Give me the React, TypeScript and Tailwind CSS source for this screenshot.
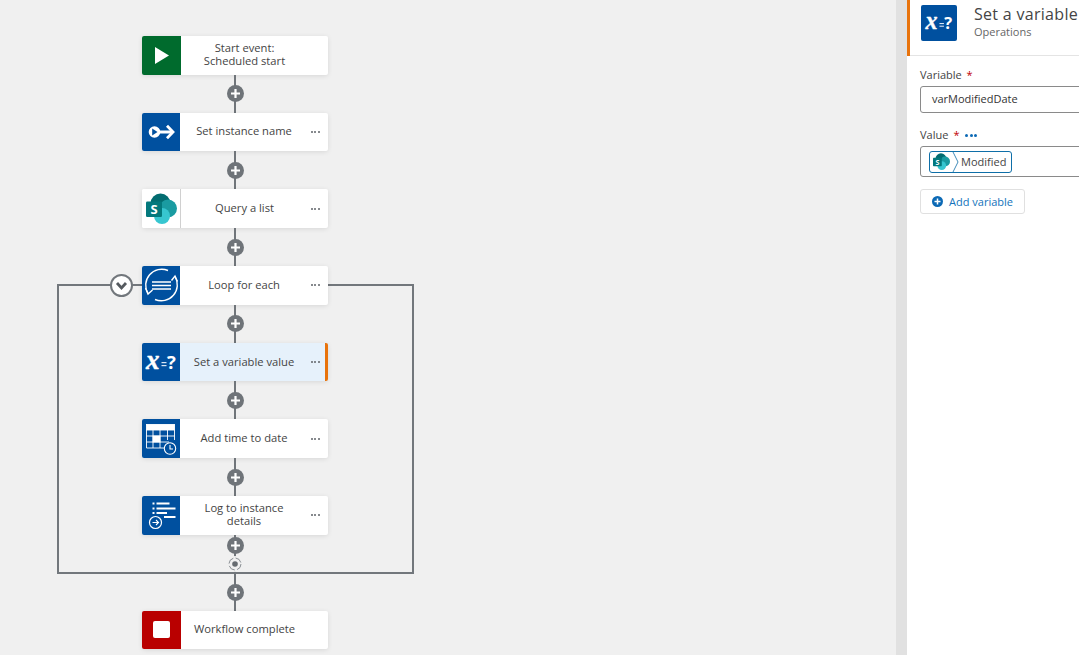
import React from "react";

const font = { fontFamily: '"Open Sans", sans-serif' };

function SharePoint({ size = 31 }: { size?: number }) {
  return (
    <svg width={size} height={size} viewBox="0 0 31 31">
      <circle cx="14.500" cy="10.500" r="10" fill="#036c70" />
      <circle cx="22" cy="15.500" r="9" fill="#1a9ba1" />
      <circle cx="16" cy="23" r="8" fill="#37c6d0" />
      <rect x="0" y="8.500" width="16" height="15.500" rx="1.200" fill="#03787c" />
      <text x="8" y="21" textAnchor="middle" fontSize="13" fontWeight="700" fill="#fff" fontFamily="Open Sans">S</text>
    </svg>
  );
}

function VarIcon({ w = 38, h = 38 }: { w?: number; h?: number }) {
  return (
    <svg width={w} height={h} viewBox="0 0 38 38">
      <text x="4" y="25.500" fontFamily="Liberation Serif" fontStyle="italic" fontWeight="700" fontSize="27" fill="#fff" stroke="#fff" strokeWidth="0.400">x</text>
      <rect x="19.500" y="19" width="5" height="1.200" fill="#d8e6f4" />
      <rect x="19.500" y="22" width="5" height="1.200" fill="#d8e6f4" />
      <text x="25" y="25.500" fontFamily="Open Sans" fontWeight="700" fontSize="18.500" fill="#fff">?</text>
    </svg>
  );
}

const PlayIcon = () => (
  <svg width="39" height="38" viewBox="0 0 39 38"><path d="M13 11 L27 19.500 L13 28 Z" fill="#fff" /></svg>
);
const InstanceIcon = () => (
  <svg width="38" height="38" viewBox="0 0 38 38" fill="none">
    <circle cx="12.500" cy="19" r="5.800" fill="#fff" />
    <path d="M10.200 15.500 L15.500 19 L10.200 22.500 Z" fill="#00509f" />
    <path d="M17 19 H30.500" stroke="#fff" strokeWidth="2.800" />
    <path d="M25 12.800 L31 19 L25 25.200" stroke="#fff" strokeWidth="2.800" />
  </svg>
);
const LoopIcon = () => (
  <svg width="38" height="38" viewBox="0 0 38 38" fill="none" stroke="#fff" strokeWidth="1.400">
    <path d="M6 27.500 A16 16 0 0 1 26 4.500" />
    <path d="M3.500 22 L6 28 L10.500 24" />
    <path d="M33 10.500 A16 16 0 0 1 13 33.500" />
    <path d="M29.500 14.500 L33 10 L35.500 15.500" />
    <path d="M10 16 H29 M10 19.500 H29 M10 23 H29" strokeWidth="1.600" />
  </svg>
);
const CalIcon = () => (
  <svg width="38" height="38" viewBox="0 0 38 38" fill="none" stroke="#fff" strokeWidth="0.900">
    <rect x="4.500" y="4.500" width="28" height="5.500" fill="#fff" />
    <path d="M4.500 10 V28 H24 M32.500 10 V20 M4.500 16 H32.500 M4.500 22 H27 M11 10 V28 M18 10 V28 M25.500 10 V20" />
    <rect x="11" y="16" width="7" height="6" fill="#fff" />
    <circle cx="28" cy="28.500" r="5.700" fill="#00509f" strokeWidth="1.100" />
    <path d="M28 25 V29 H31" strokeWidth="1.100" />
  </svg>
);
const LogIcon = () => (
  <svg width="38" height="38" viewBox="0 0 38 38" fill="none" stroke="#fff">
    <path d="M10.500 7.500 H12.500 M10.500 12.500 H12.500 M10.500 17 H12.500" strokeWidth="1.800" />
    <path d="M14.500 7.500 H27.500 M14.500 12.500 H33.500 M14.500 17 H25 M22 21 H33.500" strokeWidth="1.800" />
    <circle cx="13.500" cy="26.500" r="6" strokeWidth="1.200" />
    <path d="M10.500 26.500 H16.500 M14 24 L16.500 26.500 L14 29" strokeWidth="1.100" />
  </svg>
);
const StopIcon = () => (
  <div className="w-[17px] h-[17px] bg-white rounded-[2px]" />
);

function Dots() {
  return (
    <div className="w-[20px] shrink-0 flex justify-center gap-[1.500px] pr-[6px]">
      <span className="w-[2px] h-[2px] rounded-full bg-[#5f6368]" />
      <span className="w-[2px] h-[2px] rounded-full bg-[#5f6368]" />
      <span className="w-[2px] h-[2px] rounded-full bg-[#5f6368]" />
    </div>
  );
}

function Card({
  label,
  icon,
  iconBg = "bg-[#00509f]",
  iconW = "w-[38px]",
  dots = true,
  active = false,
}: {
  label: React.ReactNode;
  icon: React.ReactNode;
  iconBg?: string;
  iconW?: string;
  dots?: boolean;
  active?: boolean;
}) {
  return (
    <div
      className={`relative flex items-center h-[38.600px] rounded-[2px] shadow-[0_1px_5px_rgba(0,0,0,0.1)] overflow-hidden shrink-0 ${
        active ? "bg-[#e6f1fb]" : "bg-white"
      }`}
    >
      <div className={`${iconW} h-full ${iconBg} shrink-0 flex items-center justify-center`}>{icon}</div>
      <div className="flex-1 min-w-0 pb-[2px] text-center text-[11.200px] leading-[13px] text-[#444]">{label}</div>
      {dots ? <Dots /> : <div className="w-[20px] shrink-0" />}
      {active && <div className="absolute inset-y-0 right-0 w-[3px] bg-[#e8730c]" />}
    </div>
  );
}

function Plus() {
  return (
    <div className="w-[17px] h-[17px] rounded-full bg-[#6f7479] flex items-center justify-center relative z-10">
      <svg width="11" height="11" viewBox="0 0 11 11">
        <path d="M5.500 1 V10 M1 5.500 H10" stroke="#fff" strokeWidth="2.200" />
      </svg>
    </div>
  );
}

function Connector() {
  return (
    <div className="h-[38.100px] pt-[0.500px] shrink-0 relative flex items-center justify-center">
      <div className="absolute inset-y-0 left-1/2 w-[2px] -ml-[1px] bg-[#70757a]" />
      <Plus />
    </div>
  );
}

function Collapse() {
  return (
    <div className="absolute left-[110px] top-[274px] w-[23px] h-[23px] rounded-full bg-white border-2 border-[#72777c] flex items-center justify-center z-10">
      <svg width="13" height="13" viewBox="0 0 13 13" fill="none">
        <path d="M2 4 L6.500 9 L11 4" stroke="#555a5f" strokeWidth="2.800" />
      </svg>
    </div>
  );
}

function LoopEnd() {
  return (
    <div className="h-[75.900px] shrink-0 relative flex flex-col items-center">
      <div className="absolute inset-y-0 left-1/2 w-[2px] -ml-[1px] bg-[#70757a]" />
      <div className="mt-[2px]"><Plus /></div>
      <div className="relative z-10 mt-[2px] bg-[#f0f0f0] rounded-full w-[16px] h-[16px]">
        <svg width="16" height="16" viewBox="0 0 16 16" fill="none">
          <circle cx="8" cy="8" r="6" stroke="#8a8f94" strokeWidth="1" strokeDasharray="7 2.400" />
          <circle cx="8" cy="8" r="2.800" fill="#666b70" />
        </svg>
      </div>
      <div className="mt-[12px]"><Plus /></div>
    </div>
  );
}

export default function App() {
  return (
    <div className="flex w-[1079px] h-[655px] overflow-hidden" style={font}>
      <div className="relative w-[896px] h-full bg-[#f0f0f0] shrink-0 overflow-hidden pt-[36px] pl-[142px]">
        {/* loop frame drawn on the diagram canvas */}
        <div className="absolute left-[57px] top-[284px] w-[357px] h-[290px] border-2 border-[#72777c]" />
        <Collapse />
        <div className="relative w-[186px] flex flex-col">
          <Card label={<>Start event:<br />Scheduled start</>} icon={<PlayIcon />} iconBg="bg-[#006b2d]" iconW="w-[39px]" dots={false} />
          <Connector />
          <Card label="Set instance name" icon={<InstanceIcon />} />
          <Connector />
          <Card
            label="Query a list"
            icon={<SharePoint size={31} />}
            iconBg="bg-white border-r border-[#d0d0d0]"
            iconW="w-[39px]"
          />
          <Connector />
          <Card label="Loop for each" icon={<LoopIcon />} />
          <Connector />
          <Card label="Set a variable value" icon={<VarIcon />} active />
          <Connector />
          <Card label="Add time to date" icon={<CalIcon />} />
          <Connector />
          <Card label={<>Log to instance<br />details</>} icon={<LogIcon />} />
          <LoopEnd />
          <Card label="Workflow complete" icon={<StopIcon />} iconBg="bg-[#b90000]" iconW="w-[39px]" dots={false} />
        </div>
      </div>

      <div className="w-[11px] h-full bg-[#e1e1e1] shrink-0" />

      <div className="flex-1 min-w-0 h-full bg-white overflow-hidden">
        <div className="h-[56px] border-l-[3px] border-[#e8730c] relative">
          <div className="h-[55px] flex items-start pl-[11px] pt-[4px] gap-[17px] whitespace-nowrap">
            <div className="w-[36px] h-[36px] mt-[1px] bg-[#00509f] rounded-[2px] shrink-0 flex items-center justify-center">
              <VarIcon w={34} h={34} />
            </div>
            <div>
              <div className="text-[16px] leading-[21px] text-[#444] tracking-[0.300px]">Set a variable</div>
              <div className="text-[11px] leading-[14px] text-[#666]">Operations</div>
            </div>
          </div>
          <div className="h-[1px] bg-[#e4e4e4]" />
        </div>
        <div className="pl-[13px] pt-[12px] w-[260px]">
          <div className="text-[11px] leading-[14px] text-[#444]">
            Variable <span className="text-[#c00000] ml-[2px]">*</span>
          </div>
          <div className="mt-[4px] h-[27px] border border-[#8a8a8a] rounded-[3px] flex items-center pl-[11px] text-[11px] text-[#333]">
            varModifiedDate
          </div>
          <div className="mt-[15px] flex items-center text-[11px] leading-[14px] text-[#444]">
            Value <span className="text-[#c00000] ml-[5px]">*</span>
            <span className="ml-[6px] flex gap-[1.500px]">
              <span className="w-[3px] h-[3px] rounded-full bg-[#0b69b5]" />
              <span className="w-[3px] h-[3px] rounded-full bg-[#0b69b5]" />
              <span className="w-[3px] h-[3px] rounded-full bg-[#0b69b5]" />
            </span>
          </div>
          <div className="mt-[4px] h-[31px] border border-[#8a8a8a] rounded-[3px] flex items-center pl-[8px]">
            <div className="h-[22px] w-[83px] border border-[#0f6fa8] rounded-[3px] flex items-center overflow-hidden">
              <div className="w-[27px] h-full relative flex items-center justify-center pr-[5px]">
                <SharePoint size={17} />
                <svg className="absolute right-[-2px] top-0" width="7" height="20" viewBox="0 0 7 20" fill="none">
                  <path d="M1 0 L6 10 L1 20" stroke="#0f6fa8" strokeWidth="0.800" />
                </svg>
              </div>
              <span className="ml-[4px] pt-[1px] text-[11px] text-[#444]">Modified</span>
            </div>
          </div>
          <div className="mt-[12px] w-[105px] h-[25px] border border-[#e0e0e0] rounded-[3px] flex items-center justify-center gap-[6px] text-[11px] text-[#1273bb]">
            <svg width="11" height="11" viewBox="0 0 11 11">
              <circle cx="5.500" cy="5.500" r="5.500" fill="#0b69b5" />
              <path d="M5.500 2.500 V8.500 M2.500 5.500 H8.500" stroke="#fff" strokeWidth="1.500" />
            </svg>
            <span className="pt-[1px]">Add variable</span>
          </div>
        </div>
      </div>
    </div>
  );
}
